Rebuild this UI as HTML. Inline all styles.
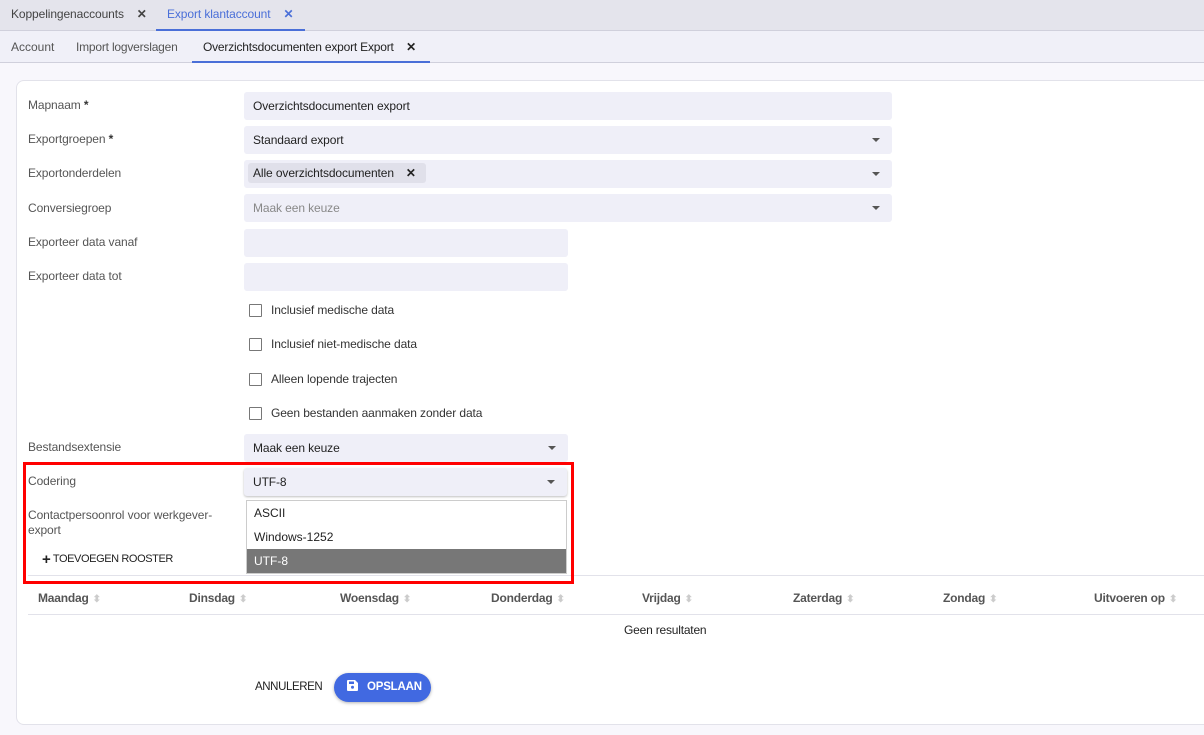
<!DOCTYPE html><html><head><style>
*{box-sizing:border-box;margin:0;padding:0}
body{width:1204px;height:735px;overflow:hidden;background:#f8f7fc;font-family:"Liberation Sans",sans-serif;font-size:12px;color:#333;position:relative}
.a{position:absolute}
.lbl{position:absolute;left:28px;color:#555;font-size:12px;letter-spacing:-0.1px}
.inp{position:absolute;left:244px;height:28px;background:#efeff8;border-radius:3px;padding:0 9px;line-height:28px;font-size:12px;color:#222;letter-spacing:-0.1px}
.car{position:absolute;right:12px;top:12px;width:0;height:0;border-left:4px solid transparent;border-right:4px solid transparent;border-top:4px solid #555}
.cb{position:absolute;left:249px;width:13px;height:13px;border:1px solid #777;background:#fff;border-radius:1px}
.cbl{position:absolute;left:271px;color:#333;letter-spacing:-0.1px}
.th{position:absolute;top:591px;font-weight:bold;color:#555;letter-spacing:-0.2px}
.th:after{content:"⬍";color:#ccc;font-size:10px;margin-left:4px}
</style></head><body>
<div class="a" style="left:0;top:0;width:1204px;height:31px;background:#e4e4ec;border-bottom:1px solid #d0d0dc"></div>
<div class="a" style="left:11px;top:7px;color:#444;font-size:12px;letter-spacing:-0.1px">Koppelingenaccounts&nbsp;&nbsp;&nbsp;&nbsp;<b>✕</b></div>
<div class="a" style="left:167px;top:7px;color:#4a6fd8;font-size:12px;letter-spacing:-0.1px">Export klantaccount&nbsp;&nbsp;&nbsp;&nbsp;<b>✕</b></div>
<div class="a" style="left:156px;top:29px;width:149px;height:2px;background:#4a6fd8"></div>
<div class="a" style="left:0;top:31px;width:1204px;height:32px;background:#f0f0f8;border-bottom:1px solid #d0d0dc"></div>
<div class="a" style="left:11px;top:40px;color:#555">Account</div>
<div class="a" style="left:76px;top:40px;color:#555;letter-spacing:-0.2px">Import logverslagen</div>
<div class="a" style="left:203px;top:40px;color:#222;letter-spacing:-0.2px">Overzichtsdocumenten export Export&nbsp;&nbsp;&nbsp;&nbsp;<b>✕</b></div>
<div class="a" style="left:192px;top:61px;width:238px;height:2px;background:#4a6fd8"></div>
<div class="a" style="left:16px;top:80px;width:1200px;height:645px;background:#fff;border:1px solid #e2e2ea;border-radius:8px"></div>

<div class="lbl" style="top:98px">Mapnaam <b style="color:#333">*</b></div>
<div class="inp" style="top:92px;width:648px">Overzichtsdocumenten export</div>
<div class="lbl" style="top:132px">Exportgroepen <b style="color:#333">*</b></div>
<div class="inp" style="top:126px;width:648px">Standaard export<div class="car"></div></div>
<div class="lbl" style="top:166px">Exportonderdelen</div>
<div class="inp" style="top:160px;width:648px;padding-left:4px"><span style="display:inline-block;background:#e0e0ea;height:20px;line-height:20px;padding:0 10px 0 5px;border-radius:3px;vertical-align:middle;margin-top:-3px">Alle overzichtsdocumenten<b style="margin-left:12px">✕</b></span><div class="car"></div></div>
<div class="lbl" style="top:201px">Conversiegroep</div>
<div class="inp" style="top:194px;width:648px;color:#888">Maak een keuze<div class="car"></div></div>
<div class="lbl" style="top:235px">Exporteer data vanaf</div>
<div class="inp" style="top:229px;width:324px"></div>
<div class="lbl" style="top:269px">Exporteer data tot</div>
<div class="inp" style="top:263px;width:324px"></div>
<div class="cb" style="top:304px"></div><div class="cbl" style="top:303px">Inclusief medische data</div>
<div class="cb" style="top:338px"></div><div class="cbl" style="top:337px">Inclusief niet-medische data</div>
<div class="cb" style="top:373px"></div><div class="cbl" style="top:372px">Alleen lopende trajecten</div>
<div class="cb" style="top:407px"></div><div class="cbl" style="top:406px">Geen bestanden aanmaken zonder data</div>
<div class="lbl" style="top:440px">Bestandsextensie</div>
<div class="inp" style="top:434px;width:324px">Maak een keuze<div class="car"></div></div>
<div class="lbl" style="top:474px">Codering</div>
<div class="inp" style="top:468px;width:323px;box-shadow:0 1px 2px rgba(0,0,0,.25)">UTF-8<div class="car"></div></div>
<div class="lbl" style="top:508px;line-height:15px">Contactpersoonrol voor werkgever-<br>export</div>
<div class="a" style="left:42px;top:551px;color:#222;font-size:11px;letter-spacing:-0.4px"><b style="font-size:15px;vertical-align:-2px">+</b> TOEVOEGEN ROOSTER</div>
<div class="a" style="left:28px;top:575px;width:1180px;height:1px;background:#e2e2ea"></div>
<div class="a" style="left:246px;top:500px;width:321px;height:74px;background:#fff;border:1px solid #ccc">
<div style="height:24px;line-height:24px;padding-left:7px;color:#222">ASCII</div>
<div style="height:24px;line-height:24px;padding-left:7px;color:#222">Windows-1252</div>
<div style="height:24px;line-height:24px;padding-left:7px;color:#fff;background:#777">UTF-8</div></div>
<div class="a" style="left:23px;top:462px;width:551px;height:122px;border:3px solid #f00"></div>
<div class="th" style="left:38px">Maandag</div><div class="th" style="left:189px">Dinsdag</div><div class="th" style="left:340px">Woensdag</div><div class="th" style="left:491px">Donderdag</div><div class="th" style="left:642px">Vrijdag</div><div class="th" style="left:793px">Zaterdag</div><div class="th" style="left:943px">Zondag</div><div class="th" style="left:1094px">Uitvoeren op</div>
<div class="a" style="left:28px;top:614px;width:1180px;height:1px;background:#e2e2ea"></div>
<div class="a" style="left:624px;top:623px;color:#222;letter-spacing:-0.2px">Geen resultaten</div>
<div class="a" style="left:255px;top:681px;color:#222;font-size:11.5px;letter-spacing:-0.4px">ANNULEREN</div>
<div class="a" style="left:334px;top:673px;width:97px;height:29px;background:#4169e1;border-radius:15px;box-shadow:0 1px 3px rgba(0,0,0,.3);color:#fff;font-weight:bold;line-height:29px;padding-left:13px;font-size:11.5px;letter-spacing:-0.2px"><svg width="11" height="11" viewBox="0 0 11 11" style="vertical-align:-1px"><path d="M0 1a1 1 0 0 1 1-1h7l3 3v7a1 1 0 0 1-1 1H1a1 1 0 0 1-1-1z" fill="#fff"/><rect x="2" y="1.5" width="5" height="2.5" fill="#4169e1"/><circle cx="5.5" cy="7.3" r="1.5" fill="#4169e1"/></svg>&nbsp;&nbsp;&nbsp;OPSLAAN</div>
</body></html>
